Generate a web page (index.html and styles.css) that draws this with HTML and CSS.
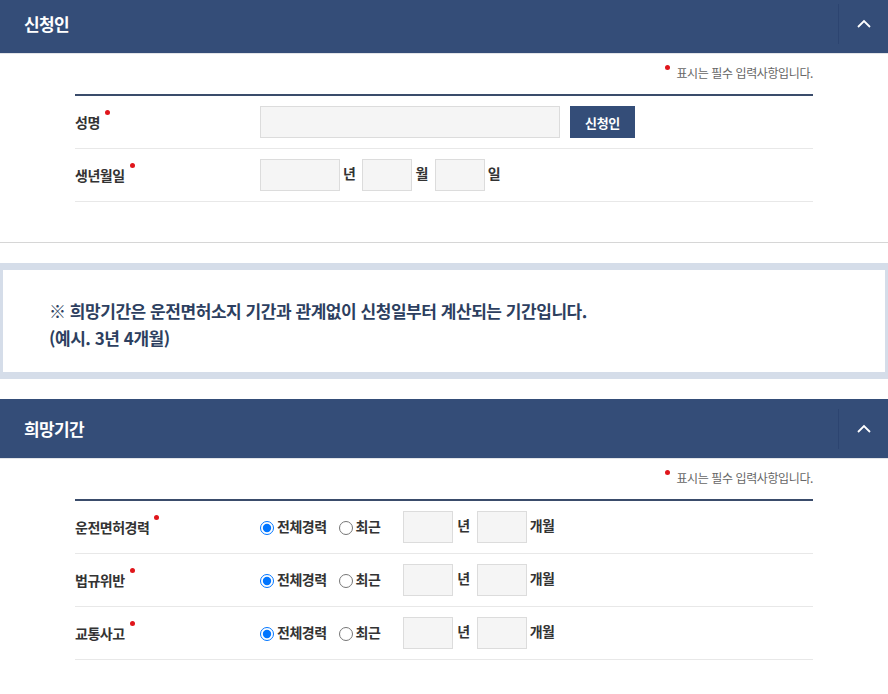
FILE: index.html
```html
<!DOCTYPE html>
<html lang="ko">
<head>
<meta charset="utf-8">
<title>신청인</title>
<link rel="stylesheet" href="styles.css">
</head>
<body>
<div class="page">
  <section class="panel panel-first">
    <div class="panel-head">
      <h2 class="panel-title">신청인</h2>
      <button class="toggle" type="button" aria-label="접기">
        <svg width="14" height="9" viewBox="0 0 14 9"><polyline points="1,8 7,2 13,8" fill="none" stroke="#fff" stroke-width="1.8"/></svg>
      </button>
    </div>
    <div class="panel-body">
      <p class="req-note"><span class="dot dot-note"></span>표시는 필수 입력사항입니다.</p>
      <div class="form-table">
        <div class="row">
          <div class="label">성명<span class="dot"></span></div>
          <div class="field">
            <input class="input input-name" type="text">
            <button class="btn" type="button">신청인</button>
          </div>
        </div>
        <div class="row">
          <div class="label">생년월일<span class="dot"></span></div>
          <div class="field">
            <input class="input input-year" type="text"><span class="unit">년</span>
            <input class="input input-sm" type="text"><span class="unit">월</span>
            <input class="input input-sm" type="text"><span class="unit">일</span>
          </div>
        </div>
      </div>
    </div>
  </section>
  <hr class="divider">
  <div class="info">
    <p>※ 희망기간은 운전면허소지 기간과 관계없이 신청일부터 계산되는 기간입니다.<br>(예시. 3년 4개월)</p>
  </div>
  <section class="panel">
    <div class="panel-head">
      <h2 class="panel-title">희망기간</h2>
      <button class="toggle" type="button" aria-label="접기">
        <svg width="14" height="9" viewBox="0 0 14 9"><polyline points="1,8 7,2 13,8" fill="none" stroke="#fff" stroke-width="1.8"/></svg>
      </button>
    </div>
    <div class="panel-body">
      <p class="req-note"><span class="dot dot-note"></span>표시는 필수 입력사항입니다.</p>
      <div class="form-table">
        <div class="row">
          <div class="label">운전면허경력<span class="dot"></span></div>
          <div class="field">
            <label class="radio"><input type="radio" name="r1" checked>전체경력</label>
            <label class="radio"><input type="radio" name="r1">최근</label>
            <input class="input input-sm input-first" type="text"><span class="unit unit-year">년</span>
            <input class="input input-sm" type="text"><span class="unit">개월</span>
          </div>
        </div>
        <div class="row">
          <div class="label">법규위반<span class="dot"></span></div>
          <div class="field">
            <label class="radio"><input type="radio" name="r2" checked>전체경력</label>
            <label class="radio"><input type="radio" name="r2">최근</label>
            <input class="input input-sm input-first" type="text"><span class="unit unit-year">년</span>
            <input class="input input-sm" type="text"><span class="unit">개월</span>
          </div>
        </div>
        <div class="row">
          <div class="label">교통사고<span class="dot"></span></div>
          <div class="field">
            <label class="radio"><input type="radio" name="r3" checked>전체경력</label>
            <label class="radio"><input type="radio" name="r3">최근</label>
            <input class="input input-sm input-first" type="text"><span class="unit unit-year">년</span>
            <input class="input input-sm" type="text"><span class="unit">개월</span>
          </div>
        </div>
      </div>
    </div>
  </section>
</div>
</body>
</html>
```
FILE: styles.css
```css
* { box-sizing: border-box; }
html, body { margin: 0; padding: 0; background: #fff; }
body {
  font-family: "Noto Sans CJK KR", "Noto Sans", sans-serif;
  color: #333;
  overflow: hidden;
}
.page { width: 888px; }

.panel-first { margin-top: -6px; }

.panel-head {
  height: 60px;
  background: #344d78;
  border-bottom: 1px solid #e2e4e8;
  display: flex;
  align-items: center;
  justify-content: space-between;
}
.panel-title {
  margin: 0 0 0 24px;
  color: #fff;
  font-size: 17px;
  font-weight: 700;
  letter-spacing: -0.6px;
  line-height: 1;
}
.toggle {
  width: 50px;
  height: 40px;
  border: 0;
  border-left: 1px solid #2c4470;
  background: transparent;
  padding: 0;
  display: flex;
  align-items: center;
  justify-content: center;
  cursor: pointer;
}

.panel-body { padding: 10px 75px 40px; }

.req-note {
  margin: 0 0 12px;
  text-align: right;
  font-size: 12px;
  line-height: 18px;
  color: #666;
  letter-spacing: -0.4px;
}
.dot {
  display: inline-block;
  width: 5px;
  height: 5px;
  border-radius: 50%;
  background: #e0161b;
  margin-left: 5px;
  vertical-align: 13px;
}
.dot-note {
  margin: 0 6px 0 0;
  vertical-align: 8px;
}

.form-table { border-top: 2px solid #3a4c6b; }
.row {
  height: 53px;
  border-bottom: 1px solid #e8e8e8;
  display: flex;
  align-items: center;
}
.label {
  width: 185px;
  flex: none;
  font-size: 14px;
  font-weight: 700;
  letter-spacing: -0.5px;
  color: #333;
  padding-bottom: 2px;
}
.field {
  display: flex;
  align-items: center;
  font-size: 14px;
  font-weight: 700;
  letter-spacing: -0.5px;
  color: #333;
}
.input {
  height: 32px;
  background: #f5f5f5;
  border: 1px solid #dcdcdc;
  padding: 0 6px;
  font: inherit;
  outline: none;
}
.input-name { width: 300px; }
.input-year { width: 80px; }
.input-sm { width: 50px; }
.unit { margin: 0 7px 4px 3px; }
.unit-year { margin: 0 7px 4px 4px; }
.input-first { margin-left: 23px; }

.btn {
  margin-left: 10px;
  width: 65px;
  height: 32px;
  border: 0;
  background: #344d78;
  color: #fff;
  font-family: inherit;
  font-size: 13px;
  font-weight: 700;
  letter-spacing: -0.3px;
  cursor: pointer;
}

.radio {
  display: flex;
  align-items: center;
  margin-right: 12px;
  padding-bottom: 2px;
}
.radio:last-of-type { margin-right: 0; }
.radio input {
  width: 14px;
  height: 14px;
  margin: 3px 3px 0 0;
}

.divider {
  margin: 0;
  border: 0;
  border-top: 1px solid #d6d6d6;
  height: 0;
}

.info {
  margin: 20px 0;
  border-style: solid;
  border-color: #d5dde9;
  border-width: 7px 3px;
  padding: 27px 0 21px 46px;
}
.info p {
  margin: 0;
  font-size: 17px;
  font-weight: 700;
  line-height: 27px;
  letter-spacing: -0.45px;
  color: #2d3f60;
}
```
